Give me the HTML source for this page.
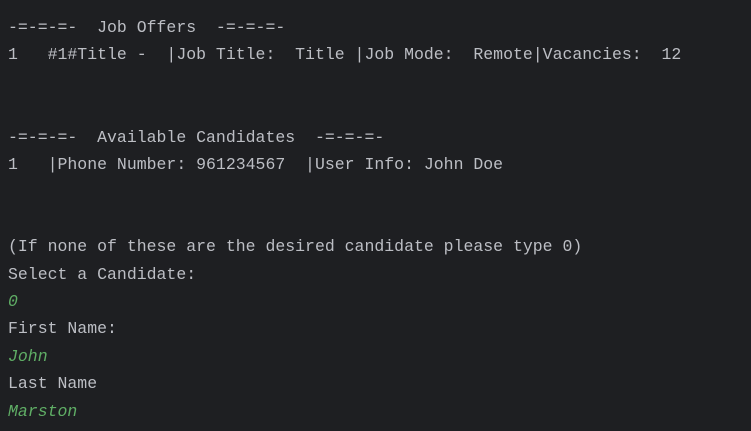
<!DOCTYPE html>
<html><head><style>
html,body{margin:0;padding:0;background:#1e1f22;width:751px;height:431px;overflow:hidden}
pre{margin:0;padding:14px 0 0 8px;font-family:"Liberation Mono",monospace;font-size:16.5px;line-height:27.4px;color:#bcbec4}
i{color:#5fad65}
</style></head><body><pre>-=-=-=-  Job Offers  -=-=-=-
1   #1#Title -  |Job Title:  Title |Job Mode:  Remote|Vacancies:  12


-=-=-=-  Available Candidates  -=-=-=-
1   |Phone Number: 961234567  |User Info: John Doe


(If none of these are the desired candidate please type 0)
Select a Candidate:
<i>0</i>
First Name:
<i>John</i>
Last Name
<i>Marston</i></pre></body></html>
